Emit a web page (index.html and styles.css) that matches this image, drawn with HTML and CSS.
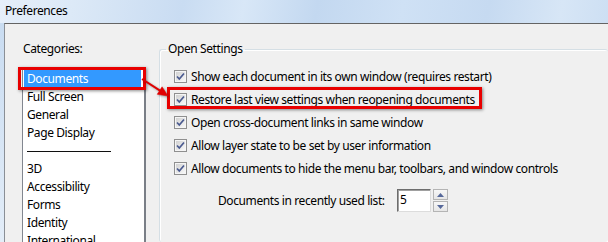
FILE: index.html
```html
<!DOCTYPE html>
<html>
<head>
<meta charset="utf-8">
<title>Preferences</title>
<link rel="stylesheet" href="styles.css">
</head>
<body>
<div class="titlebar">Preferences</div>
<div class="window">
  <div class="frame-left"></div>
  <div class="client">
    <div class="categories">
      <div class="cat-label">Categories:</div>
      <ul class="cat-list">
        <li class="selected">Documents</li>
        <li>Full Screen</li>
        <li>General</li>
        <li>Page Display</li>
        <li class="sep"><span></span></li>
        <li>3D</li>
        <li>Accessibility</li>
        <li>Forms</li>
        <li>Identity</li>
        <li>International</li>
      </ul>
    </div>
    <fieldset class="group">
      <legend>Open Settings</legend>
      <div class="row"><span class="cb"><svg width="13" height="13" viewBox="0 0 13 13"><defs><linearGradient id="g" x1="0" y1="0" x2="1" y2="1"><stop offset="0" stop-color="#cfcfcf"/><stop offset="1" stop-color="#fafafa"/></linearGradient></defs><rect x="0.5" y="0.5" width="12" height="12" fill="#f4f4f4" stroke="#8f8f8f"/><rect x="1.5" y="1.5" width="10" height="10" fill="url(#g)" stroke="#f5f5f5"/><path d="M3 6.5 L5.3 9 L10 3.5" fill="none" stroke="#4a5a8f" stroke-width="1.7"/></svg></span><span>Show each document in its own window (requires restart)</span></div>
      <div class="row marked"><span class="cb"><svg width="13" height="13" viewBox="0 0 13 13"><rect x="0.5" y="0.5" width="12" height="12" fill="#f4f4f4" stroke="#8f8f8f"/><rect x="1.5" y="1.5" width="10" height="10" fill="url(#g)" stroke="#f5f5f5"/><path d="M3 6.5 L5.3 9 L10 3.5" fill="none" stroke="#4a5a8f" stroke-width="1.7"/></svg></span><span>Restore last view settings when reopening documents</span></div>
      <div class="row"><span class="cb"><svg width="13" height="13" viewBox="0 0 13 13"><rect x="0.5" y="0.5" width="12" height="12" fill="#f4f4f4" stroke="#8f8f8f"/><rect x="1.5" y="1.5" width="10" height="10" fill="url(#g)" stroke="#f5f5f5"/><path d="M3 6.5 L5.3 9 L10 3.5" fill="none" stroke="#4a5a8f" stroke-width="1.7"/></svg></span><span>Open cross-document links in same window</span></div>
      <div class="row"><span class="cb"><svg width="13" height="13" viewBox="0 0 13 13"><rect x="0.5" y="0.5" width="12" height="12" fill="#f4f4f4" stroke="#8f8f8f"/><rect x="1.5" y="1.5" width="10" height="10" fill="url(#g)" stroke="#f5f5f5"/><path d="M3 6.5 L5.3 9 L10 3.5" fill="none" stroke="#4a5a8f" stroke-width="1.7"/></svg></span><span>Allow layer state to be set by user information</span></div>
      <div class="row"><span class="cb"><svg width="13" height="13" viewBox="0 0 13 13"><rect x="0.5" y="0.5" width="12" height="12" fill="#f4f4f4" stroke="#8f8f8f"/><rect x="1.5" y="1.5" width="10" height="10" fill="url(#g)" stroke="#f5f5f5"/><path d="M3 6.5 L5.3 9 L10 3.5" fill="none" stroke="#4a5a8f" stroke-width="1.7"/></svg></span><span>Allow documents to hide the menu bar, toolbars, and window controls</span></div>
      <div class="spin-row">
        <span class="spin-label">Documents in recently used list:</span>
        <span class="spin-input">5</span>
        <span class="spin-btns">
          <span class="spin-btn"><svg width="7" height="4" viewBox="0 0 7 4"><path d="M0 4 L3.5 0 L7 4 Z" fill="#56689a"/></svg></span>
          <span class="spin-btn"><svg width="7" height="4" viewBox="0 0 7 4"><path d="M0 0 L3.5 4 L7 0 Z" fill="#56689a"/></svg></span>
        </span>
      </div>
    </fieldset>
  </div>
</div>
<svg class="arrow" width="34" height="26" viewBox="0 0 34 26">
  <g fill="#e00000" stroke="#e00000">
    <line x1="4" y1="5" x2="22" y2="16.6" stroke-width="2"/>
    <path d="M30 22 L19.2 20.3 L24.1 12.8 Z" stroke-width="0.5"/>
  </g>
</svg>
</body>
</html>
```
FILE: styles.css
```css
html, body {
  margin: 0;
  padding: 0;
}
body {
  position: relative;
  width: 608px;
  height: 242px;
  overflow: hidden;
  font-family: "Noto Sans", "Open Sans", sans-serif;
  font-size: 12px;
  letter-spacing: -0.4px;
  color: #000;
  background: #d7e6f6;
}
.titlebar {
  height: 23px;
  line-height: 21px;
  padding-left: 5px;
  box-sizing: border-box;
  background: linear-gradient(100deg, #e6effa 0%, #dce9f7 12%, #c9dcf2 30%, #d8e7f7 40%, #c3d8f0 52%, #cfe1f5 66%, #c6daf1 80%, #d7e6f6 92%, #cddff3 100%);
}
.window {
  display: flex;
  height: 219px;
}
.frame-left {
  width: 4px;
  background: linear-gradient(180deg, #c9dcf1, #e3edf8);
}
.client {
  flex: 1;
  display: flex;
  background: #f0f0f0;
  border-top: 1px solid #646464;
  border-left: 1px solid #8a8f96;
}
.categories {
  padding-left: 17px;
  padding-top: 17px;
}
.cat-label {
  line-height: 16px;
  padding-left: 1px;
}
.cat-list {
  list-style: none;
  margin: 11px 0 0 0;
  padding: 1px 0 0 0;
  width: 121px;
  height: 200px;
  background: #fff;
  border: 1px solid #828790;
  border-right-width: 2px;
  border-right-color: #7a7f87;
}
.cat-list li {
  height: 18px;
  line-height: 18px;
  padding-left: 4px;
  white-space: nowrap;
}
.cat-list li.selected {
  position: relative;
  background: #3399ff;
  color: #fff;
  margin: 0 3px 0 1px;
  padding-left: 3px;
}
.cat-list li.selected::after {
  content: "";
  position: absolute;
  left: -6px;
  right: -5px;
  top: -3px;
  bottom: -2px;
  border: 3px solid #e80000;
  box-shadow: 1px 1px 3px rgba(0, 0, 0, 0.45);
}
.cat-list li.sep {
  display: flex;
  align-items: center;
}
.cat-list li.sep span {
  display: block;
  width: 84px;
  height: 1px;
  background: #101010;
}
.group {
  margin: 17px 0 0 13px;
  padding: 8px 0 0 6px;
  border: 1px solid #d5dfe5;
  border-radius: 3px;
  box-shadow: inset 1px 1px 0 #fff, 1px 1px 0 #fff;
  flex: 1;
  border-right: none;
  border-bottom: none;
  min-width: 0;
}
.group legend {
  padding: 0 2px;
  line-height: 16px;
}
.row {
  display: flex;
  align-items: center;
  height: 23px;
  margin-left: 8px;
  white-space: nowrap;
  width: fit-content;
}
.row.marked {
  position: relative;
}
.row.marked::after {
  content: "";
  position: absolute;
  left: -7px;
  right: -7px;
  top: -1px;
  bottom: 2px;
  border: 3px solid #e80000;
  box-shadow: 1px 1px 3px rgba(0, 0, 0, 0.45);
}
.cb {
  display: flex;
  width: 13px;
  height: 13px;
  margin-right: 4px;
}
.spin-row {
  display: flex;
  align-items: center;
  margin-top: 9px;
  margin-left: 52px;
  height: 23px;
}
.spin-label {
  width: 179px;
  white-space: nowrap;
}
.spin-input {
  box-sizing: border-box;
  width: 34px;
  height: 23px;
  line-height: 20px;
  padding-left: 2px;
  background: #fff;
  border: 1px solid;
  border-color: #6d6d6d #dcdcdc #dcdcdc #6d6d6d;
  box-shadow: inset 1px 1px 0 #a0a0a0;
}
.spin-btns {
  display: flex;
  flex-direction: column;
  gap: 1px;
  margin-left: 2px;
}
.spin-btn {
  box-sizing: border-box;
  width: 15px;
  height: 11px;
  display: flex;
  align-items: center;
  justify-content: center;
  border: 1px solid #b4b4b4;
  background: linear-gradient(#f7f7f7, #e6e6e6);
}
.arrow {
  position: absolute;
  left: 138px;
  top: 74px;
  filter: drop-shadow(1px 1px 1px rgba(0, 0, 0, 0.35));
}
```
